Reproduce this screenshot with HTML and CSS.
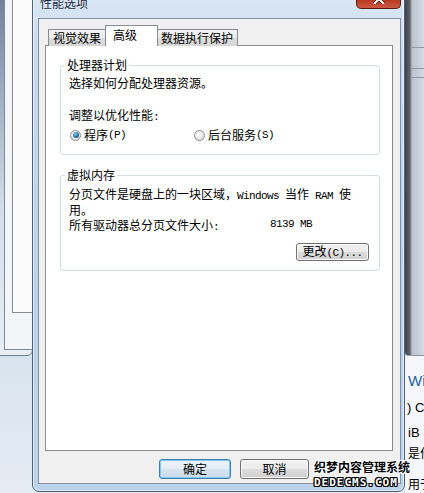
FILE: index.html
```html
<!DOCTYPE html>
<html lang="zh-CN">
<head>
    <meta charset="UTF-8">
    <meta name="viewport" content="width=device-width, initial-scale=1.0">
    <title>性能选项</title>
    <link rel="stylesheet" href="styles.css">
</head>
<body>
<div class="desktop">

    <!-- window behind, left -->
    <div class="back-win">
        <div class="back-client">
            <div class="back-panel"></div>
        </div>
    </div>

    <!-- window behind, right -->
    <div class="back-right">
        <div class="back-right-upper">
            <div class="line l1"></div>
            <div class="line l2"></div>
            <div class="line l3"></div>
        </div>
        <div class="back-right-lower">
            <div class="frag frag-wi">Wi</div>
            <div class="frag frag-c">) C</div>
            <div class="frag frag-gb">iB</div>
            <div class="frag frag-op">是作</div>
            <div class="frag frag-use">用于</div>
        </div>
    </div>

    <!-- Performance options dialog -->
    <div class="dialog">
        <div class="titlebar">
            <span class="title">性能选项</span>
            <span class="close">
                <svg width="12" height="10" viewBox="0 0 12 10">
                    <path d="M1 0 L11 10 M11 0 L1 10" stroke="#4a140c" stroke-width="3.4"/>
                    <path d="M1 0 L11 10 M11 0 L1 10" stroke="#fff" stroke-width="2"/>
                </svg>
            </span>
        </div>

        <div class="client">
            <div class="tabs">
                <div class="tab tab-visual">视觉效果</div>
                <div class="tab tab-adv active">高级</div>
                <div class="tab tab-dep">数据执行保护</div>
            </div>

            <div class="panel">
                <fieldset class="group group-cpu">
                    <legend>处理器计划</legend>
                    <div class="line-text">选择如何分配处理器资源。</div>
                    <div class="line-text adjust">调整以优化性能<span class="latin">:</span></div>
                    <div class="radio-row">
                        <label class="radio-item">
                            <span class="radio checked"></span>程序<span class="latin">(P)</span>
                        </label>
                        <label class="radio-item">
                            <span class="radio"></span>后台服务<span class="latin">(S)</span>
                        </label>
                    </div>
                </fieldset>

                <fieldset class="group group-mem">
                    <legend>虚拟内存</legend>
                    <p class="mem-desc">分页文件是硬盘上的一块区域，<span class="latin">Windows </span>当作<span class="latin"> RAM </span>使用。</p>
                    <div class="size-row">
                        <span>所有驱动器总分页文件大小<span class="latin">:</span></span>
                        <span class="latin">8139 MB</span>
                    </div>
                    <div class="change-row">
                        <button class="btn btn-small">更改<span class="latin">(C)...</span></button>
                    </div>
                </fieldset>
            </div>

            <div class="actions">
                <button class="btn default">确定</button>
                <button class="btn">取消</button>
            </div>
        </div>
    </div>

    <div class="watermark">
        <div class="wm-cn">织梦内容管理系统</div>
        <div class="wm-en">DEDECMS.COM</div>
    </div>
</div>
</body>
</html>
```

FILE: styles.css
```css
body {
    margin: 0;
    font-family: "Noto Sans CJK SC", sans-serif;
    font-size: 12px;
    color: #000;
}
.desktop {
    position: relative;
    width: 424px;
    height: 493px;
    overflow: hidden;
    background: linear-gradient(to bottom, #c7d5e5, #d8e3ef 70%, #e4ebf3);
}
.latin {
    font-family: "Liberation Mono", monospace;
    font-size: 11px;
    letter-spacing: -0.6px;
}

/* left background window */
.back-win {
    position: absolute;
    left: -20px;
    top: -12px;
    width: 53px;
    height: 368px;
    box-sizing: border-box;
    padding: 0 0 5px 23px;
    border: 1px solid #6f7f92;
    border-radius: 0 0 6px 6px;
    background: linear-gradient(to bottom, #6a7d95, #9fb1c5 30%, #d3deea 60%, #e7eef5);
    display: flex;
}
.back-client {
    flex: 1;
    display: flex;
    flex-direction: column;
    padding: 0 0 36px 7px;
    background: #f3f5f7;
    border-left: 1px solid #7f8a98;
    border-bottom: 1px solid #7f8a98;
}
.back-panel {
    flex: 1;
    background: #fbfbfb;
    border-left: 1px solid #8b8b8b;
    border-bottom: 1px solid #8b8b8b;
}

/* right background window */
.back-right {
    position: absolute;
    left: 405px;
    top: 0;
    width: 19px;
    height: 493px;
    display: flex;
    flex-direction: column;
}
.back-right-upper {
    position: relative;
    height: 355px;
    background: linear-gradient(to right, #3c4048 0, #60656d 5px, #b9c3ce 7px, #d3dbe4 100%);
    border-bottom: 1px solid #8d96a1;
    border-radius: 0 0 0 4px;
}
.back-right-upper .line {
    position: absolute;
    left: 7px;
    right: 0;
    height: 1px;
    background: #8f99a5;
}
.back-right-upper .l1 { top: 47px; }
.back-right-upper .l2 { top: 68px; }
.back-right-upper .l3 { top: 77px; }
.back-right-lower {
    flex: 1;
    background: #f4f6f9;
    padding: 12px 0 0 3px;
    white-space: nowrap;
    overflow: hidden;
}
.frag {
    font-family: "Liberation Sans", "Noto Sans CJK SC", sans-serif;
    font-size: 13px;
}
.frag-wi {
    height: 26px;
    line-height: 26px;
    color: #2563a8;
    font-size: 15px;
}
.frag-c { height: 27px; line-height: 27px; margin-left: -1px; }
.frag-gb { height: 24px; line-height: 24px; }
.frag-op { height: 18px; line-height: 18px; font-size: 12px; }
.frag-use { margin-top: 12px; font-size: 12px; }

/* dialog */
.dialog {
    position: absolute;
    left: 32px;
    top: -12px;
    width: 373px;
    height: 504px;
    box-sizing: border-box;
    padding: 0 3px 7px 5px;
    border: 1px solid #4d5f75;
    border-radius: 7px;
    background: linear-gradient(to bottom, #dde8f4 0, #cadcf0 60px, #b9d1ea 60%, #bcd3ec 100%);
    box-shadow: inset 0 0 0 1px rgba(255, 255, 255, 0.55);
    display: flex;
    flex-direction: column;
}
.titlebar {
    height: 29px;
    display: flex;
    align-items: flex-start;
}
.title {
    padding: 6px 0 0 2px;
    line-height: 16px;
    color: #1b2a3f;
}
.close {
    margin-left: auto;
    width: 45px;
    height: 20px;
    box-sizing: border-box;
    border: 1px solid #5a1a10;
    border-top: none;
    border-radius: 0 0 5px 5px;
    background: linear-gradient(to bottom, #e49a86, #cf5d45 45%, #b7361f 55%, #cc5a43);
    display: flex;
    align-items: center;
    justify-content: center;
}
.client {
    flex: 1;
    display: flex;
    flex-direction: column;
    padding: 6px 7px 4px 6px;
    background: #f0f0f0;
    border: 1px solid #8091a6;
}

/* tabs */
.tabs {
    display: flex;
    align-items: flex-start;
    height: 21px;
    padding-left: 3px;
    position: relative;
    z-index: 1;
}
.tab {
    box-sizing: border-box;
    height: 17px;
    margin-top: 4px;
    line-height: 15px;
    border: 1px solid #898c95;
    border-bottom: none;
    background: linear-gradient(to bottom, #f3f3f3, #ebebeb 50%, #dedede 50%, #d6d6d6);
    white-space: nowrap;
}
.tab-visual { width: 58px; padding-left: 4px; }
.tab-adv { width: 53px; padding-left: 7px; margin-left: -1px; }
.tab-dep { width: 81px; padding-left: 3px; margin-left: -1px; }
.tab.active {
    height: 21px;
    margin-top: 0;
    line-height: 17px;
    background: #fff;
    position: relative;
    z-index: 2;
}
.panel {
    flex: 1;
    margin-top: -1px;
    padding: 12px 12px 0 14px;
    background: #fff;
    border: 1px solid #898c95;
}

/* group boxes */
.group {
    margin: 0;
    min-width: 0;
    padding: 4px 8px 12px 8px;
    border: 1px solid #d5dfe5;
    border-radius: 3px;
}
.group legend {
    padding: 0 2px;
    margin-left: -4px;
    line-height: 14px;
}
.line-text {
    line-height: 14px;
}
.adjust {
    margin-top: 18px;
}
.radio-row {
    margin-top: 4px;
    display: grid;
    grid-template-columns: 124px auto;
    line-height: 14px;
}
.radio-item {
    display: flex;
    align-items: center;
}
.radio {
    position: relative;
    width: 11px;
    height: 11px;
    box-sizing: border-box;
    margin: 0 3px 0 1px;
    border-radius: 50%;
    border: 1px solid #8d8f92;
    background: radial-gradient(circle at 40% 35%, #ffffff, #e6e6e6 55%, #cfd1d3);
}
.radio.checked::after {
    content: "";
    position: absolute;
    left: 1.5px;
    top: 1.5px;
    width: 6px;
    height: 6px;
    border-radius: 50%;
    background: radial-gradient(circle at 40% 35%, #8fd0f5, #1f6ea6 55%, #0f3f66);
}
.group-mem {
    margin-top: 13px;
    padding: 5px 8px 9px 8px;
}
.mem-desc {
    margin: 0;
    line-height: 13px;
}
.size-row {
    margin-top: 2px;
    display: grid;
    grid-template-columns: 201px auto;
    line-height: 13px;
}
.change-row {
    margin-top: 9px;
    display: flex;
    justify-content: flex-end;
    padding-right: 2px;
}

/* buttons */
.btn {
    height: 20px;
    width: 69px;
    padding: 0;
    box-sizing: border-box;
    font-family: "Noto Sans CJK SC", sans-serif;
    font-size: 12px;
    line-height: 16px;
    color: #000;
    border: 1px solid #707070;
    border-radius: 3px;
    background: linear-gradient(to bottom, #f2f2f2, #ebebeb 50%, #dddddd 50%, #cfcfcf);
    box-shadow: inset 0 0 0 1px #fbfbfb;
}
.btn-small {
    width: 73px;
    height: 18px;
    line-height: 14px;
}
.btn.default {
    width: 72px;
    border-color: #3c7fb1;
    background: linear-gradient(to bottom, #edf4fa, #e3edf6 50%, #d6e4f0 50%, #cddcea);
    box-shadow: inset 0 0 0 1px #7fcaf0;
}
.actions {
    margin-top: 8px;
    display: flex;
    justify-content: flex-end;
    gap: 9px;
    padding-right: 84px;
}

/* watermark overlay */
.watermark {
    position: absolute;
    left: 314px;
    top: 457px;
    white-space: nowrap;
}
.wm-cn {
    font-weight: bold;
    font-size: 12px;
    line-height: 19px;
    color: #000;
    text-shadow: 1px 0 #fff, -1px 0 #fff, 0 1px #fff, 0 -1px #fff, 1px 1px #fff, -1px -1px #fff, 1px -1px #fff, -1px 1px #fff;
}
.wm-en {
    font-family: "DejaVu Sans Mono", monospace;
    font-weight: bold;
    font-size: 11px;
    line-height: 13px;
    letter-spacing: 1px;
    color: #fff;
    text-shadow: 1px 0 #000, -1px 0 #000, 0 1px #000, 0 -1px #000, 1px 1px #000, -1px -1px #000, 1px -1px #000, -1px 1px #000;
}
```
